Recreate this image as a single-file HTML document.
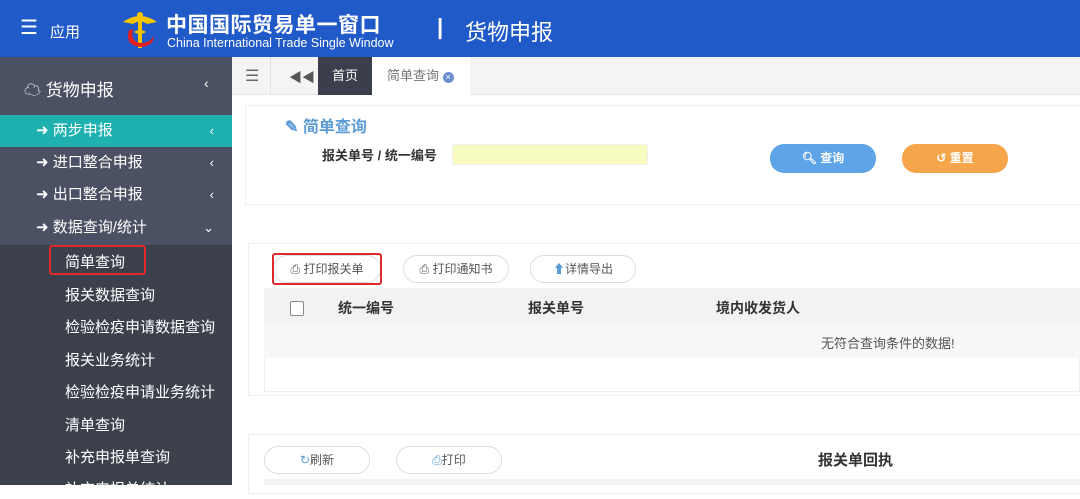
<!DOCTYPE html>
<html><head><meta charset="utf-8"><style>
*{margin:0;padding:0;box-sizing:border-box}
body{width:1080px;height:485px;overflow:hidden;font-family:"Liberation Sans","Noto Sans CJK SC",sans-serif;background:#fff;position:relative}
.a{position:absolute}
.hd{left:0;top:0;width:1080px;height:57px;background:#2059c8;color:#fff}
.sb{left:0;top:57px;width:232px;height:428px;background:#3b404b}
.it{left:0;width:232px;height:32px;color:#fff;font-size:15px;line-height:32px}
.sub{left:65px;color:#fff;font-size:15px}
.btn{border:1px solid #ddd;border-radius:14px;background:#fff;font-size:12px;color:#555;text-align:center;line-height:26px}
.chev{position:absolute;right:18px;top:0;font-size:13px}
</style></head><body>
<div class="a hd">
 <div class="a" style="left:20px;top:18px;font-size:20px;line-height:20px">☰</div>
 <div class="a" style="left:50px;top:21px;font-size:15px">应用</div>
 <svg class="a" style="left:120px;top:10px" width="40" height="40" viewBox="0 0 40 40"><path d="M3 12 Q20 0 37 12 L27 14 Q20 9 13 14Z" fill="#f5c400"/><rect x="18" y="4" width="4" height="34" fill="#f5c400"/><circle cx="20" cy="5" r="3" fill="#f5c400"/><path d="M9 20 Q4 36 22 37 Q34 35 34 26 Q30 33 20 33 Q10 31 13 19Z" fill="#e02020"/><path d="M14 22 Q20 18 26 22 Q20 26 14 22Z" fill="#f5c400"/></svg>
 <div class="a" style="left:166px;top:9px;font-size:21px;font-weight:bold;letter-spacing:0.5px">中国国际贸易单一窗口</div>
 <div class="a" style="left:167px;top:36px;font-size:12.5px">China International Trade Single Window</div>
 <div class="a" style="left:437px;top:14px;font-size:22px;font-weight:bold">|</div>
 <div class="a" style="left:465px;top:15px;font-size:22px">货物申报</div>
</div>
<div class="a sb">
 <div class="a" style="left:0;top:0;width:232px;height:188px;background:#4b5162"></div>
 <div class="a" style="left:24px;top:19px;color:#fff;font-size:17px">☁ 货物申报</div>
 <div class="a" style="left:204px;top:18px;color:#fff;font-size:14px">‹</div>
 <div class="a it" style="top:58px;background:#1fb0b0"><span style="margin-left:36px">➜ 两步申报</span><span class="chev">‹</span></div>
 <div class="a it" style="top:90px"><span style="margin-left:36px">➜ 进口整合申报</span><span class="chev">‹</span></div>
 <div class="a it" style="top:122px"><span style="margin-left:36px">➜ 出口整合申报</span><span class="chev">‹</span></div>
 <div class="a it" style="top:155px"><span style="margin-left:36px">➜ 数据查询/统计</span><span class="chev">⌄</span></div>
 <div class="a" style="left:49px;top:188px;width:97px;height:30px;border:2px solid #e02a2a;border-radius:3px"></div>
 <div class="a sub" style="top:194px">简单查询</div>
 <div class="a sub" style="top:227px">报关数据查询</div>
 <div class="a sub" style="top:259px">检验检疫申请数据查询</div>
 <div class="a sub" style="top:292px">报关业务统计</div>
 <div class="a sub" style="top:324px">检验检疫申请业务统计</div>
 <div class="a sub" style="top:357px">清单查询</div>
 <div class="a sub" style="top:389px">补充申报单查询</div>
 <div class="a sub" style="top:421px">补充申报单统计</div>
</div>
<div class="a" style="left:232px;top:57px;width:848px;height:38px;background:#f4f4f4;border-bottom:1px solid #e6e6e6"></div>
<div class="a" style="left:245px;top:66px;color:#666;font-size:16px">☰</div>
<div class="a" style="left:270px;top:57px;width:1px;height:38px;background:#e2e2e2"></div>
<div class="a" style="left:289px;top:67px;color:#555;font-size:13px">◀◀</div>
<div class="a" style="left:318px;top:57px;width:54px;height:38px;background:#3a3f4b;color:#fff;font-size:13px;text-align:center;line-height:38px">首页</div>
<div class="a" style="left:372px;top:57px;width:98px;height:38px;background:#fff;color:#777;font-size:13px;line-height:38px;padding-left:15px">简单查询 <span style="display:inline-block;width:11px;height:11px;border-radius:50%;background:#6a8fcf;color:#fff;font-size:9px;line-height:11px;text-align:center;vertical-align:0">×</span></div>
<div class="a" style="left:245px;top:105px;width:840px;height:100px;border:1px solid #eee"></div>
<div class="a" style="left:285px;top:113px;color:#5b9bd5;font-size:16px;font-weight:bold">✎ 简单查询</div>
<div class="a" style="left:322px;top:145px;color:#333;font-size:13px;font-weight:bold">报关单号 / 统一编号</div>
<div class="a" style="left:452px;top:144px;width:196px;height:21px;background:#f8fbc0;border:1px solid #eee;border-radius:2px"></div>
<div class="a" style="left:770px;top:144px;width:106px;height:29px;background:#5ea5e8;border-radius:14px;color:#fff;font-size:12px;font-weight:bold;text-align:center;line-height:29px">🔍︎ 查询</div>
<div class="a" style="left:902px;top:144px;width:106px;height:29px;background:#f5a64a;border-radius:14px;color:#fff;font-size:12px;font-weight:bold;text-align:center;line-height:29px">↺ 重置</div>
<div class="a" style="left:248px;top:243px;width:840px;height:153px;border:1px solid #eee"></div>
<div class="a btn" style="left:273px;top:255px;width:108px;height:28px">⎙ 打印报关单</div>
<div class="a" style="left:272px;top:253px;width:110px;height:32px;border:2px solid #e02a2a;border-radius:3px"></div>
<div class="a btn" style="left:403px;top:255px;width:106px;height:28px">⎙ 打印通知书</div>
<div class="a btn" style="left:530px;top:255px;width:106px;height:28px"><span style="color:#5b9bd5">⬆</span>详情导出</div>
<div class="a" style="left:264px;top:288px;width:816px;height:104px;border:1px solid #eee"></div>
<div class="a" style="left:264px;top:288px;width:816px;height:36px;background:#f2f2f2"></div>
<div class="a" style="left:290px;top:301px;width:14px;height:15px;border:1px solid #888;border-radius:2px;background:#fff"></div>
<div class="a" style="left:338px;top:298px;font-size:14px;font-weight:bold;color:#333">统一编号</div>
<div class="a" style="left:528px;top:298px;font-size:14px;font-weight:bold;color:#333">报关单号</div>
<div class="a" style="left:716px;top:298px;font-size:14px;font-weight:bold;color:#333">境内收发货人</div>
<div class="a" style="left:264px;top:324px;width:816px;height:34px;background:#f7f7f7"></div>
<div class="a" style="left:821px;top:333px;font-size:13px;color:#555">无符合查询条件的数据!</div>
<div class="a" style="left:248px;top:434px;width:840px;height:60px;border:1px solid #eee"></div>
<div class="a btn" style="left:264px;top:446px;width:106px;height:28px"><span style="color:#5b9bd5">↻</span>刷新</div>
<div class="a btn" style="left:396px;top:446px;width:106px;height:28px"><span style="color:#5b9bd5">⎙</span>打印</div>
<div class="a" style="left:818px;top:449px;font-size:15px;font-weight:bold;color:#333">报关单回执</div>
<div class="a" style="left:264px;top:479px;width:816px;height:6px;background:#f2f2f2"></div>
</body></html>
